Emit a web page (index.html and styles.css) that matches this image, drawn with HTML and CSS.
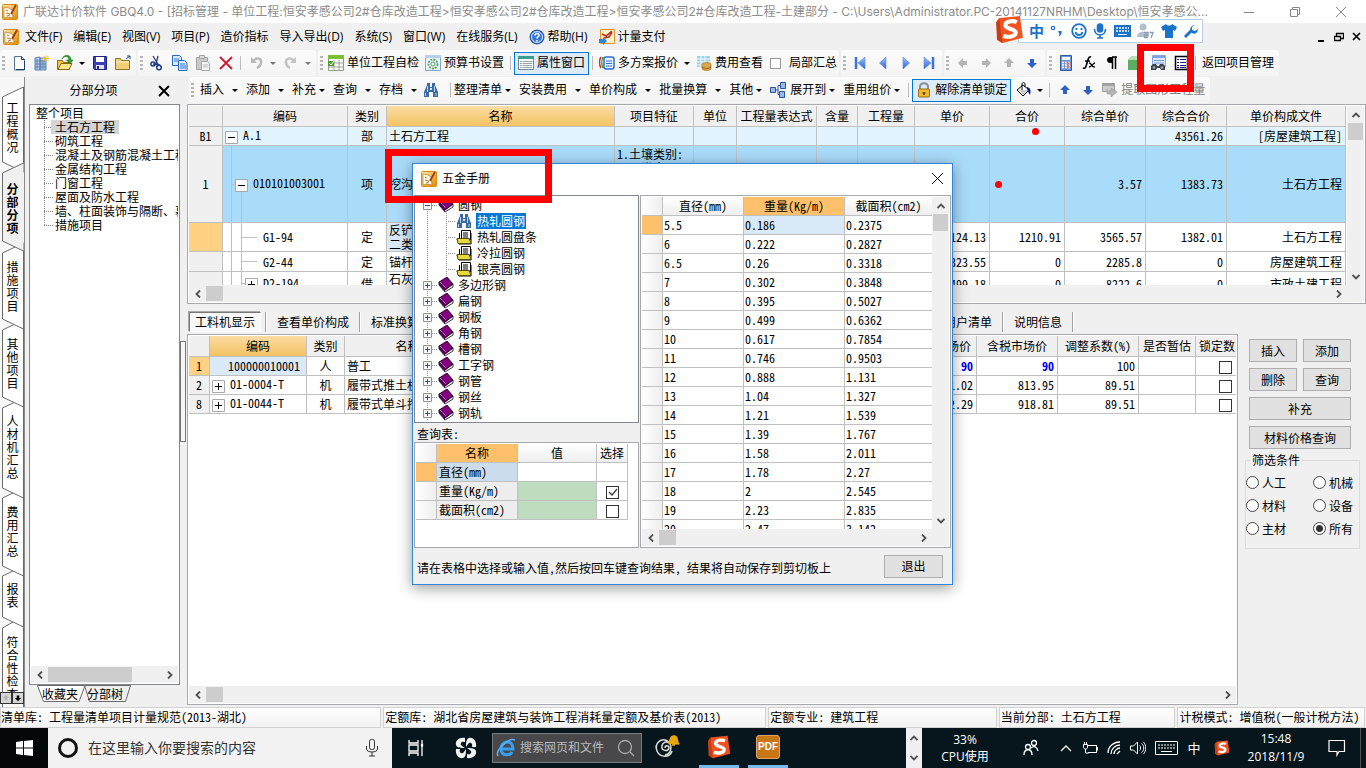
FILE: index.html
```html
<!DOCTYPE html>
<html lang="zh-CN">
<head>
<meta charset="utf-8">
<title>广联达计价软件 GBQ4.0</title>
<link rel="stylesheet" href="styles.css">
</head>
<body>
<svg class="defs" aria-hidden="true">
  <defs>
    <linearGradient id="gold" x1="0" y1="0" x2="1" y2="1"><stop offset="0" stop-color="#fce9a8"/><stop offset="1" stop-color="#e08a00"/></linearGradient>
    <linearGradient id="blue" x1="0" y1="0" x2="0" y2="1"><stop offset="0" stop-color="#9cc0ff"/><stop offset="1" stop-color="#2f62d8"/></linearGradient>
  </defs>
  <symbol id="app" viewBox="0 0 16 16"><rect x=".5" y=".5" width="15" height="15" rx="1" fill="url(#gold)" stroke="#d98a10"/><path d="M2 3l5 1 3 2 1 8-5-1-4 1z" fill="#fffaf0" stroke="#b06a10" stroke-width=".6"/><path d="M4 6l2 1M4 9l4 1M5 12l3-1" stroke="#9b5a10" stroke-width=".8"/><path d="M14 1L9 10" stroke="#a33a10" stroke-width="1.800"/></symbol>
  <symbol id="new" viewBox="0 0 16 16"><path d="M3.500 1.500h7l3 3v10.500h-10z" fill="#fff" stroke="#56749c"/><path d="M10.500 1.500v3h3M5 14.500h8.500V6" fill="none" stroke="#1f3d66"/></symbol>
  <symbol id="building" viewBox="0 0 16 16"><path d="M1 3l5-1v13H1zM6 3h6v12H6z" fill="#b9d0ee" stroke="#5c7fae"/><path d="M3 4v10M8 5v9M10 5v9M1 6h11M1 9h11M1 12h11" stroke="#4e75aa" stroke-width=".8"/><path d="M12 0v7M8.500 3.500h7M9.500 1l5 5M14.500 1l-5 5" stroke="#f3c52c"/></symbol>
  <symbol id="open" viewBox="0 0 16 16"><path d="M.5 14.500v-9h5l1 2h6v7z" fill="#f3c846" stroke="#8f6708"/><path d="M1 14.500l3-6h11l-3 6z" fill="#ffe58c" stroke="#8f6708"/><path d="M5 4c2-4 7-3 7 1h-2.500l3.500 4 3-4h-2C14-1 7-1 5 4z" fill="#2ea52e" stroke="#14701a" stroke-width=".6"/></symbol>
  <symbol id="save" viewBox="0 0 16 16"><path d="M1.500 1.500h13v13h-12l-1-1z" fill="#3b3fb5" stroke="#20247a"/><path d="M4 2h8v5H4z" fill="#fff"/><path d="M4 10h8v4H4z" fill="#dfe3f5"/><path d="M5 11h2v3H5z" fill="#20247a"/></symbol>
  <symbol id="folder" viewBox="0 0 16 16"><path d="M.5 14.500v-11h5l1 2h8v9z" fill="#f0cf78" stroke="#8f7430"/><path d="M1 7h13" stroke="#fff3c4"/><path d="M11 4l4-3M12 1h3v3" stroke="#234a86" fill="none"/></symbol>
  <symbol id="cut" viewBox="0 0 16 16"><path d="M4 1l6 10M9 1L7 9M4 9l7 1" stroke="#27407a" stroke-width="1.300" fill="none"/><circle cx="4" cy="9" r="2" fill="none" stroke="#1c3a86" stroke-width="1.500"/><circle cx="10" cy="12.500" r="2.300" fill="none" stroke="#1c3a86" stroke-width="1.500"/></symbol>
  <symbol id="copy" viewBox="0 0 16 16"><path d="M.5.5h7l2 2v8h-9z" fill="#dce9fb" stroke="#2467b8"/><path d="M6.500 5.500h6l2.500 2.500v7.500H6.500z" fill="#dce9fb" stroke="#2467b8"/><path d="M2 4h5M2 6h4M8 9h5M8 11h6M8 13h6" stroke="#2f7ad2"/></symbol>
  <symbol id="paste" viewBox="0 0 16 16"><path d="M1.500 2.500h11v12h-11z" fill="#c9c9c9" stroke="#a4a4a4"/><path d="M4.500.5h5v3h-5z" fill="#ddd" stroke="#a4a4a4"/><path d="M6.500 6.500h6l2 2v7h-8z" fill="#f4f4f4" stroke="#a9a9a9"/><path d="M8 10h5M8 12h5" stroke="#bbb"/></symbol>
  <symbol id="del" viewBox="0 0 16 16"><path d="M2 2l12 12M14 2L2 14" stroke="#d2172f" stroke-width="1.800"/></symbol>
  <symbol id="undo" viewBox="0 0 16 16"><path d="M3 2v6h6z" fill="#b9b9b9"/><path d="M5 6c3-4 9-3 8 2-.4 2.500-2 4-4 5" fill="none" stroke="#b9b9b9" stroke-width="2.500"/></symbol>
  <symbol id="redo" viewBox="0 0 16 16"><path d="M13 2v6H7z" fill="#c4c4c4"/><path d="M11 6C8 2 2 3 3 8c.4 2.500 2 4 4 5" fill="none" stroke="#c4c4c4" stroke-width="2.500"/></symbol>
  <symbol id="check" viewBox="0 0 16 16"><path d="M.5.5h15v15H.5z" fill="#fff" stroke="#8d9c8d"/><path d="M0 0h16v4H0z" fill="#7cbf31"/><path d="M1 8h14M1 12h14M6 5v10M11 5v10" stroke="#9aa39a"/><path d="M0 6h6v5H0z" fill="#4d9e25"/><path d="M1 8l2 2 3-4" stroke="#fff" fill="none"/></symbol>
  <symbol id="gear" viewBox="0 0 16 16"><path d="M.5.5h15v15H.5z" fill="#eef5fb" stroke="#7fa6cc"/><path d="M0 0h16v3H0z" fill="#b5d0ea"/><circle cx="8" cy="9" r="4.500" fill="none" stroke="#58a268" stroke-width="1.800" stroke-dasharray="2 1"/><circle cx="8" cy="9" r="2" fill="none" stroke="#58a268"/></symbol>
  <symbol id="props" viewBox="0 0 16 16"><path d="M.5 1.500h15v13H.5z" fill="#fff" stroke="#6d8aa5"/><path d="M0 1h16v3H0z" fill="#3c9a94"/><path d="M2 6.500h2M5 6.500h9M2 8.500h2M5 8.500h9M2 10.500h2M5 10.500h9M2 12.500h2M5 12.500h9" stroke="#93a3b0"/></symbol>
  <symbol id="quote" viewBox="0 0 16 16"><path d="M2 2C0 5 0 10 2 13" stroke="#e02d2d" fill="none" stroke-width="1.500"/><path d="M4 2C2.500 5 2.500 10 4 13" stroke="#38a038" fill="none" stroke-width="1.500"/><rect x="5" y="2" width="10" height="12" rx="2" fill="#e9f2ff" stroke="#2c6dd0" stroke-width="1.500"/><path d="M7 6h6M7 8.500h6M7 11h6" stroke="#2c6dd0"/></symbol>
  <symbol id="cost" viewBox="0 0 16 16"><path d="M1 1h13v11H1z" fill="#9fd2e8"/><path d="M1 4h13M1 7h13M1 10h13M5 1v11M9 1v11" stroke="#eefaff"/><path d="M6 9c2-2 8-2 9 0v5c-2 2-7 2-9 0z" fill="#d8a94c" stroke="#a97a22" stroke-width=".7"/><path d="M6 12c3 2 6 2 9 0" stroke="#8d6113" fill="none"/></symbol>
  <symbol id="first" viewBox="0 0 16 16"><path d="M4 2v12" stroke="#3f73dc" stroke-width="2.500"/><path d="M13 2L6 8l7 6z" fill="url(#blue)" stroke="#5c86de" stroke-width=".6"/></symbol>
  <symbol id="prev" viewBox="0 0 16 16"><path d="M11 2L4.500 8 11 14z" fill="url(#blue)" stroke="#5c86de" stroke-width=".6"/></symbol>
  <symbol id="arrow" viewBox="0 0 16 16"><path d="M8 3l5 5h-3v4H6V8H3z" fill="currentColor"/></symbol>
  <symbol id="calc" viewBox="0 0 16 16"><path d="M2.500.5h11v15h-11z" fill="#6f97d8" stroke="#355a9c"/><path d="M4 2h8v3H4z" fill="#fff"/><path d="M4 7.500h8M4 10h8M4 12.500h8" stroke="#fff" stroke-width="1.500" stroke-dasharray="2 1"/><path d="M10.500 7v6" stroke="#ee7a6b"/></symbol>
  <symbol id="fx" viewBox="0 0 16 16"><path d="M10 2C8 1 7 4 6 8s-1.500 6-4 5M4 6h5" fill="none" stroke="#000" stroke-width="1.600"/><path d="M8 8c3 0 2 4 6 4M14 8c-2 0-3 4-6 4" fill="none" stroke="#000" stroke-width="1.300"/></symbol>
  <symbol id="para" viewBox="0 0 16 16"><path d="M8 2H6C2 2 2 8 6 8h2z"/><path d="M8 2h5M8.500 2v12M11.500 2v12" stroke="#000" stroke-width="1.500"/></symbol>
  <symbol id="cube" viewBox="0 0 16 16"><path d="M1 5l4-4h10v10l-4 4H1z" fill="#5cae65"/><path d="M1 5l4-4h10l-4 4z" fill="#b5e0b5"/><path d="M11 5l4-4v10l-4 4z" fill="#2a7a37"/></symbol>
  <symbol id="manual" viewBox="0 0 16 16"><path d="M2.500.5h13v11h-13z" fill="#dbe7fb" stroke="#8ba5d8"/><path d="M3 1h12v2H3z" fill="#7fa2e2"/><path d="M4 5.500h10M4 8h10" stroke="#7b9bd4"/><path d="M1 11l2-2h3l1 2h2l1-2h3l2 2v4h-4l-1-2H7l-1 2H1z" fill="#3c4149"/><circle cx="4" cy="12.500" r="1.300" fill="#aab"/><circle cx="12" cy="12.500" r="1.300" fill="#aab"/></symbol>
  <symbol id="list" viewBox="0 0 16 16"><path d="M2.500 1.500h12v13h-12z" fill="#fff" stroke="#000" stroke-width="1.500"/><path d="M4 4.500h2M7 4.500h6M4 7.500h2M7 7.500h6M4 10.500h2M7 10.500h6M4 12.500h2M7 12.500h6" stroke="#1a1a90"/></symbol>
  <symbol id="bino" viewBox="0 0 16 16"><path d="M4 1h3v4h2V1h3v2l3 7v5h-5v-5H6v5H1v-5l3-7z" fill="#3a69a8"/><path d="M4.500 4v6M11.500 4v6M2.500 11v3M13 11v3" stroke="#b8d5f2"/><path d="M7 6h2v2H7z" fill="#dceafa"/></symbol>
  <symbol id="expand" viewBox="0 0 16 16"><path d="M.5 5.500h5v5h-5zM10.500.5h5v6h-5zM9.500 9.500h5v6h-5z" fill="#9ab8e8" stroke="#2b52a0"/><path d="M5 8h3M8 3.500v9M8 3.500h2M8 12.500h2" stroke="#2b52a0" fill="none"/></symbol>
  <symbol id="lock" viewBox="0 0 16 16"><path d="M4 7V5c0-5 8-5 8 0v2" fill="none" stroke="#8b8f96" stroke-width="2"/><rect x="2.500" y="7" width="11" height="8" rx="1" fill="#f1b932" stroke="#9a6b08"/><path d="M8 10v3M6.500 11h3" stroke="#5e4106" stroke-width="1.500"/></symbol>
  <symbol id="bucket" viewBox="0 0 16 16"><path d="M2 8l6-5 6 5-6 6z" fill="#fff" stroke="#000"/><path d="M4 8h9l-5 5z" fill="#c9c9c9"/><path d="M7 8V2c0-2 3-2 3 0v3" fill="none" stroke="#000"/><path d="M12 5c4 1 4 4 3 8-2-2-2-5-3-6z" fill="#0c1c86"/></symbol>
  <symbol id="extract" viewBox="0 0 16 16"><path d="M.5 1.500h12v8H.5z" fill="#ccc" stroke="#9d9d9d"/><path d="M1 2h11v2H1z" fill="#a4a4a4"/><path d="M5 7v5h4v3l6-5-6-4v3H7" fill="#b4b4b4" stroke="#989898" stroke-width=".6"/></symbol>
  <symbol id="help" viewBox="0 0 16 16"><circle cx="8" cy="8" r="7" fill="#3a78d8" stroke="#1c4a9c"/><circle cx="8" cy="8" r="5.500" fill="none" stroke="#d9e7fb"/><path d="M6 6.500c0-3 4.500-2.500 4 0-.3 1.200-2 1.300-2 3M8 11v1.500" fill="none" stroke="#fff" stroke-width="1.500"/></symbol>
  <symbol id="pay" viewBox="0 0 16 16"><path d="M1.500.5h14v14h-14z" fill="#fff0cc" stroke="#e3952b"/><path d="M3 5l4 2 6-5M5 9l5-1 3-5" stroke="#b5321e" stroke-width="1.600" fill="none"/><path d="M0 10h4V8l4 4-4 4v-2H0z" fill="#2f86d6"/></symbol>
  <symbol id="book" viewBox="0 0 16 16"><path d="M1 5v3l6 7 8-5V7l-8 6z" fill="#fff" stroke="#000" stroke-width=".8"/><path d="M1 5l8-5 6 7-8 6z" fill="#800080" stroke="#000" stroke-width=".8"/><path d="M2 5l6 6" stroke="#fff" stroke-width=".8" stroke-dasharray="1 1"/><path d="M1 5v3l6 7v-2z" fill="#55005a"/></symbol>
  <symbol id="pages" viewBox="0 0 16 16"><path d="M5.500 1.500h9v9h-9z" fill="#fff" stroke="#000"/><path d="M7 4h5M7 6h5M7 8h5" stroke="#000"/><path d="M3.500 4v6H1l2 5h12V4M1 10h14" fill="none" stroke="#000"/><path d="M1 9.500h12l2 5H2z" fill="#e6da3c" stroke="#3c3800" stroke-width=".8"/></symbol>
  <symbol id="sogou" viewBox="0 0 28 28"><path d="M4 3l20-2 3 21-20 5-5-3z" fill="#f4511e"/><path d="M2 24L1 7l3-4 3 24z" fill="#c63d12"/><path d="M21 7c-4-2-11-1-11 3s10 3 10 7-7 5-12 3" fill="none" stroke="#fff" stroke-width="4"/></symbol>
  <symbol id="left" viewBox="0 0 8 8"><path d="M6 .5L2.500 4 6 7.500" fill="none" stroke="#505050" stroke-width="1.800"/></symbol>
  <symbol id="plus" viewBox="0 0 13 13"><path d="M.5.5h12v12H.5z" fill="#fff" stroke="#a8a8a8"/><path d="M3 6.500h7M6.500 3v7" stroke="#000"/></symbol>
  <symbol id="minus" viewBox="0 0 13 13"><path d="M.5.5h12v12H.5z" fill="#fff" stroke="#a8a8a8"/><path d="M3 6.500h7" stroke="#000"/></symbol>
  <symbol id="tplus" viewBox="0 0 9 9"><path d="M.5.5h8v8h-8z" fill="#f6f6f6" stroke="#919191"/><path d="M2 4.500h5M4.500 2v5" stroke="#3050a0"/></symbol>
  <symbol id="tminus" viewBox="0 0 9 9"><path d="M.5.5h8v8h-8z" fill="#f6f6f6" stroke="#919191"/><path d="M2 4.500h5" stroke="#3050a0"/></symbol>
</svg>

<header class="titlebar">
  <svg class="ic"><use href="#app"/></svg>
  <h1 class="title">广联达计价软件 GBQ4.0 - [招标管理 - 单位工程:恒安孝感公司2#仓库改造工程&gt;恒安孝感公司2#仓库改造工程&gt;恒安孝感公司2#仓库改造工程-土建部分 - C:\Users\Administrator.PC-20141127NRHM\Desktop\恒安孝感公...</h1>
  <div class="winbtns">
    <button aria-label="最小化"><svg class="ic10" viewBox="0 0 10 10"><path d="M0 5.500h10" stroke="#888"/></svg></button>
    <button aria-label="还原"><svg class="ic10" viewBox="0 0 10 10"><path d="M.5 2.500h7v7h-7zM2.500 2V.5h7v7H8" fill="none" stroke="#888"/></svg></button>
    <button aria-label="关闭"><svg class="ic10" viewBox="0 0 10 10"><path d="M0 0l10 10M10 0L0 10" stroke="#888"/></svg></button>
  </div>
</header>

<nav class="menubar">
  <svg class="ic"><use href="#app"/></svg>
  <button>文件(F)</button><button>编辑(E)</button><button>视图(V)</button><button>项目(P)</button><button>造价指标</button><button>导入导出(D)</button><button>系统(S)</button><button>窗口(W)</button><button>在线服务(L)</button>
  <button class="withicon"><svg class="ic"><use href="#help"/></svg>帮助(H)</button>
  <button class="withicon"><svg class="ic"><use href="#pay"/></svg>计量支付</button>
  <div class="mdibtns">
    <button aria-label="最小化子窗口"><svg class="ic10" viewBox="0 0 10 10"><path d="M2 9h6" stroke="#000" stroke-width="2"/></svg></button>
    <button aria-label="还原子窗口"><svg class="ic10" viewBox="0 0 10 10"><path d="M.5 4.500h6v4h-6zM2.500 4V1.500h7v5H7M0 4.500h7M2 1.500h8" fill="none" stroke="#000" stroke-width="1.300"/></svg></button>
    <button aria-label="关闭子窗口"><svg class="ic10" viewBox="0 0 10 10"><path d="M1 1l7 7M8 1L1 8" stroke="#000" stroke-width="1.600"/></svg></button>
  </div>
</nav>

<div class="toolbar">
  <div class="group"><i class="grip"></i>
    <button class="slot" aria-label="新建"><svg class="ic"><use href="#new"/></svg></button><button class="slot" aria-label="新建工程"><svg class="ic"><use href="#building"/></svg></button><button class="slot" aria-label="打开"><svg class="ic"><use href="#open"/></svg></button><button class="drop" aria-label="打开选项"></button><button class="slot" aria-label="保存"><svg class="ic"><use href="#save"/></svg></button><button class="slot" aria-label="目录"><svg class="ic"><use href="#folder"/></svg></button></div>
  <div class="group"><i class="grip"></i>
    <button class="slot" aria-label="剪切"><svg class="ic"><use href="#cut"/></svg></button><button class="slot" aria-label="复制"><svg class="ic"><use href="#copy"/></svg></button><button class="slot" aria-label="粘贴"><svg class="ic"><use href="#paste"/></svg></button><button class="slot" aria-label="删除"><svg class="ic"><use href="#del"/></svg></button><i class="sep"></i><button class="slot" aria-label="撤销"><svg class="ic"><use href="#undo"/></svg></button><button class="drop dim" aria-label="撤销选项"></button><button class="slot" aria-label="重做"><svg class="ic"><use href="#redo"/></svg></button><button class="drop dim" aria-label="重做选项"></button></div>
  <div class="group"><i class="grip"></i>
    <button class="tool"><svg class="ic"><use href="#check"/></svg>单位工程自检</button><button class="tool"><svg class="ic"><use href="#gear"/></svg>预算书设置</button><i class="sep"></i><button class="tool on"><svg class="ic"><use href="#props"/></svg>属性窗口</button><i class="sep"></i><button class="tool"><svg class="ic"><use href="#quote"/></svg>多方案报价</button><button class="drop" aria-label="报价选项"></button><button class="tool"><svg class="ic"><use href="#cost"/></svg>费用查看</button><label class="opt"><input type="checkbox" class="box small">局部汇总</label></div>
  <div class="group"><i class="grip"></i>
    <button class="slot" aria-label="首条"><svg class="ic"><use href="#first"/></svg></button><button class="slot" aria-label="上一条"><svg class="ic"><use href="#prev"/></svg></button><button class="slot" aria-label="下一条"><svg class="ic flip"><use href="#prev"/></svg></button><button class="slot" aria-label="末条"><svg class="ic flip"><use href="#first"/></svg></button></div>
  <div class="group"><i class="grip"></i>
    <button class="slot dimarrow" aria-label="左移"><svg class="ic r270"><use href="#arrow"/></svg></button><button class="slot dimarrow" aria-label="右移"><svg class="ic r90"><use href="#arrow"/></svg></button><button class="slot dimarrow" aria-label="上移"><svg class="ic"><use href="#arrow"/></svg></button><button class="slot bluearrow" aria-label="下移"><svg class="ic r180"><use href="#arrow"/></svg></button></div>
  <div class="group"><i class="grip"></i>
    <button class="slot" aria-label="计算器"><svg class="ic"><use href="#calc"/></svg></button><button class="slot" aria-label="函数"><svg class="ic"><use href="#fx"/></svg></button><button class="slot" aria-label="符号"><svg class="ic"><use href="#para"/></svg></button><button class="slot" aria-label="图元"><svg class="ic"><use href="#cube"/></svg></button><button class="slot" aria-label="五金手册"><svg class="ic"><use href="#manual"/></svg></button><button class="slot" aria-label="清单"><svg class="ic"><use href="#list"/></svg></button><i class="sep"></i><button class="tool">返回项目管理</button></div>
</div>

<div class="work">
  <nav class="rail">
    <svg class="railart" width="25" height="640" aria-hidden="true">
      <g fill="#fff" stroke="#6a6a6a">
        <path d="M2.500 640V551l21-12v101z"/><path d="M2.500 499v41l21 10V489z"/><path d="M2.500 421v68l21 10V411z"/><path d="M2.500 331v80l21 10V321z"/><path d="M2.500 253v67l21 10V243z"/><path d="M2.500 176v66l21 10V166z"/>
        <path d="M2.500 20v65l21 10V10z"/>
      </g>
      <path d="M2.500 96v68l21 10V86z" fill="#f0f0f0"/><path d="M23.500 86l-21 10v68l21 10" fill="none" stroke="#6a6a6a"/>
    </svg>
    <button class="t1">工程概况</button><button class="t2 cur">分部分项</button><button class="t3">措施项目</button><button class="t3">其他项目</button><button class="t5">人材机汇总</button><button class="t3">费用汇总</button><button class="t7">报表</button><button class="t8">符合性检查</button>
    <div class="railscroll"><button aria-label="向上"><svg class="ic10 dimarrow"><use href="#arrow"/></svg></button><button aria-label="向下"><svg class="ic10 r180"><use href="#arrow"/></svg></button></div>
  </nav>

  <aside class="side">
    <div class="sidehead"><h2>分部分项</h2><button aria-label="关闭面板"><svg width="12" height="12" viewBox="0 0 12 12"><path d="M1 1l10 10M11 1L1 11" stroke="#000" stroke-width="2"/></svg></button></div>
    <div class="sidebox">
      <ul class="tree">
        <li class="root">整个项目</li>
        <li><span class="sel">土石方工程</span></li><li><span>砌筑工程</span></li><li><span>混凝土及钢筋混凝土工程</span></li><li><span>金属结构工程</span></li><li><span>门窗工程</span></li><li><span>屋面及防水工程</span></li><li><span>墙、柱面装饰与隔断、幕墙</span></li><li><span>措施项目</span></li>
      </ul>
      <div class="hscroll"><button aria-label="左滚"><svg class="ic8"><use href="#left"/></svg></button><i class="thumb wide"></i><button class="end" aria-label="右滚"><svg class="ic8 flip"><use href="#left"/></svg></button></div>
    </div>
    <div class="sidetabs">
      <svg width="100" height="19" aria-hidden="true"><path d="M55.500.5h46l-5 16H60.500z" fill="#f0f0f0" stroke="#6a6a6a"/><path d="M8.500.5l6 16H50l6-16z" fill="#fff" stroke="#6a6a6a"/></svg>
      <button>收藏夹</button><button>分部树</button>
    </div>
  </aside>

  <div class="splitter"><i></i></div>

  <main class="content">
    <div class="toolbar second">
      <div class="group"><i class="grip"></i>
        <button class="menu">插入</button><button class="menu">添加</button><button class="menu tight">补充</button><button class="menu">查询</button><button class="menu">存档</button><button class="slot find" aria-label="查找"><svg class="ic"><use href="#bino"/></svg></button><i class="sep"></i><button class="menu tight">整理清单</button><button class="menu">安装费用</button><button class="menu">单价构成</button><button class="menu">批量换算</button><button class="menu tight">其他</button><button class="menu tight"><svg class="ic"><use href="#expand"/></svg>展开到</button><button class="menu tight">重用组价</button><i class="sep"></i><button class="tool on"><svg class="ic"><use href="#lock"/></svg>解除清单锁定</button><button class="slot" aria-label="填充色"><svg class="ic"><use href="#bucket"/></svg></button><button class="drop" aria-label="颜色选项"></button><i class="sep"></i><button class="slot bluearrow" aria-label="上移行"><svg class="ic"><use href="#arrow"/></svg></button><button class="slot bluearrow" aria-label="下移行"><svg class="ic r180"><use href="#arrow"/></svg></button><button class="tool off"><svg class="ic"><use href="#extract"/></svg>提取图形工程量</button></div>
    </div>

    <section class="panel upper">
      <div class="viewport">
        <table class="grid bill">
          <colgroup><col class="c34"><col class="c125"><col class="c39"><col><col class="c79"><col class="c43"><col class="c80"><col class="c41"><col class="c57"><col class="c75"><col class="c75"><col class="c81"><col class="c81"><col class="c119"></colgroup>
          <thead><tr><th></th><th>编码</th><th>类别</th><th class="hot">名称</th><th>项目特征</th><th>单位</th><th>工程量表达式</th><th>含量</th><th>工程量</th><th>单价</th><th>合价</th><th>综合单价</th><th>综合合价</th><th>单价构成文件</th></tr></thead>
          <tbody>
            <tr class="r1"><th>B1</th><td class="lv0"><svg class="ic13"><use href="#minus"/></svg>A.1</td><td class="mid">部</td><td>土石方工程</td><td></td><td></td><td></td><td></td><td></td><td></td><td></td><td></td><td class="num">43561.26</td><td class="num">[房屋建筑工程]</td></tr>
            <tr class="r2"><th>1</th><td class="lv1"><svg class="ic13"><use href="#minus"/></svg>010101003001</td><td class="mid">项</td><td>挖沟</td><td class="feat">1.土壤类别:<br>&#12288;三类土</td><td></td><td></td><td></td><td></td><td></td><td></td><td class="num">3.57</td><td class="num">1383.73</td><td class="num">土石方工程</td></tr>
            <tr class="r3"><th class="hotrow"></th><td class="lv2">G1-94</td><td class="mid">定</td><td class="curcell">反铲<br>二类</td><td></td><td></td><td></td><td></td><td></td><td class="num">124.13</td><td class="num">1210.91</td><td class="num">3565.57</td><td class="num">1382.01</td><td class="num">土石方工程</td></tr>
            <tr class="r4"><th></th><td class="lv2">G2-44</td><td class="mid">定</td><td>锚杆</td><td></td><td></td><td></td><td></td><td></td><td class="num">323.55</td><td class="num">0</td><td class="num">2285.8</td><td class="num">0</td><td class="num">房屋建筑工程</td></tr>
            <tr class="r5"><th></th><td class="lv3"><svg class="ic13"><use href="#plus"/></svg>D2-194</td><td class="mid">借</td><td class="top">石灰</td><td></td><td></td><td></td><td></td><td></td><td class="num">499.18</td><td class="num">0</td><td class="num">8222.6</td><td class="num">0</td><td class="num">市政土建工程</td></tr>
          </tbody>
        </table>
        <div class="vscroll"><button aria-label="上滚"><svg class="ic8 r90"><use href="#left"/></svg></button><i class="vthumb"></i><button class="end" aria-label="下滚"><svg class="ic8 r270"><use href="#left"/></svg></button></div>
      </div>
      <div class="hscroll inset"><button aria-label="左滚"><svg class="ic8"><use href="#left"/></svg></button><i class="thumb"></i><button class="end" aria-label="右滚"><svg class="ic8 flip"><use href="#left"/></svg></button></div>
    </section>

    <div class="tabs">
      <button class="cur">工料机显示</button><i></i><button>查看单价构成</button><i></i><button>标准换算</button><span class="grow"></span><button>用户清单</button><i></i><button>说明信息</button><i></i>
    </div>

    <div class="lower">
      <section class="panel detail">
        <div class="viewport">
          <table class="grid res">
            <colgroup><col class="c21"><col class="c97"><col class="c38"><col class="c126"><col><col class="c81"><col class="c81"><col class="c81"><col class="c57"><col class="c40"></colgroup>
            <thead><tr><th></th><th class="hot">编码</th><th>类别</th><th>名称</th><th></th><th class="rt">不含税市场价</th><th>含税市场价</th><th>调整系数(%)</th><th>是否暂估</th><th class="cut">锁定数</th></tr></thead>
            <tbody>
              <tr><th class="hotrow">1</th><td class="curcell num code">100000010001</td><td class="mid">人</td><td>普工</td><td></td><td class="num strong">90</td><td class="num strong">90</td><td class="num">100</td><td></td><td class="ck"><input type="checkbox" class="box" aria-label="锁定第1行"></td></tr>
              <tr><th>2</th><td class="lvp"><svg class="ic13"><use href="#plus"/></svg>01-0004-T</td><td class="mid">机</td><td>履带式推土机</td><td></td><td class="num">801.02</td><td class="num">813.95</td><td class="num">89.51</td><td></td><td class="ck"><input type="checkbox" class="box" aria-label="锁定第2行"></td></tr>
              <tr><th>8</th><td class="lvp"><svg class="ic13"><use href="#plus"/></svg>01-0044-T</td><td class="mid">机</td><td>履带式单斗挖掘机</td><td></td><td class="num">902.29</td><td class="num">918.81</td><td class="num">89.51</td><td></td><td class="ck"><input type="checkbox" class="box" aria-label="锁定第8行"></td></tr>
            </tbody>
          </table>
        </div>
        <div class="hscroll"><button aria-label="左滚"><svg class="ic8"><use href="#left"/></svg></button><i class="thumb"></i><button class="end" aria-label="右滚"><svg class="ic8 flip"><use href="#left"/></svg></button></div>
      </section>
      <aside class="actions">
        <div class="btns"><button>插入</button><button>添加</button><button>删除</button><button>查询</button><button class="full">补充</button><button class="full">材料价格查询</button></div>
        <fieldset>
          <legend>筛选条件</legend>
          <label><input type="radio" name="f">人工</label><label><input type="radio" name="f">机械</label><label><input type="radio" name="f">材料</label><label><input type="radio" name="f">设备</label><label><input type="radio" name="f">主材</label><label><input type="radio" name="f" checked>所有</label>
        </fieldset>
      </aside>
    </div>
  </main>
</div>

<footer class="status"><span>清单库: 工程量清单项目计量规范(2013-湖北)</span><span>定额库: 湖北省房屋建筑与装饰工程消耗量定额及基价表(2013)</span><span>定额专业: 建筑工程</span><span>当前分部: 土石方工程</span><span>计税模式: 增值税(一般计税方法)</span></footer>

<div class="taskbar">
  <button class="start" aria-label="开始"><svg width="17" height="16" viewBox="0 0 17 16"><path d="M0 2l7-1v6.500H0zM8 1l9-1v7.500H8zM0 8.500h7V15l-7-1zM8 8.500h9V16l-9-1z" fill="#fff"/></svg></button>
  <div class="cortana"><svg width="22" height="22" viewBox="0 0 22 22"><circle cx="11" cy="11" r="8.500" fill="none" stroke="#111" stroke-width="3"/></svg><input type="text" placeholder="在这里输入你要搜索的内容" aria-label="搜索"><svg width="12" height="18" viewBox="0 0 12 18"><rect x="3.500" y=".5" width="5" height="10" rx="2" fill="none" stroke="#333"/><path d="M.5 7v3c0 4 11 4 11 0V7M6 13v4M3 17h6" fill="none" stroke="#333"/></svg></div>
  <button class="app" aria-label="任务视图"><svg width="18" height="18" viewBox="0 0 18 18" fill="none" stroke="#fff" stroke-width="1.300"><path d="M2 1v3h9V1M2 6h9v6H2zM2 17v-3h9v3M15 1v3M15 7v10"/><path d="M14.500 5h1v2h-1z" fill="#fff"/></svg></button>
  <button class="app" aria-label="浏览器"><svg width="22" height="22" viewBox="0 0 22 22" fill="#f2f2f2"><path d="M10 1C4 0 0 4 1 8c1 3 5 3 9 3-3-2-5-3-4-5s3-1 4-1z"/><path d="M21 10c1-6-3-10-7-9-3 1-3 5-3 9 2-3 3-5 5-4s1 3 1 4z"/><path d="M12 21c6 1 10-3 9-7-1-3-5-3-9-3 3 2 5 3 4 5s-3 1-4 1z"/><path d="M1 12c-1 6 3 10 7 9 3-1 3-5 3-9-2 3-3 5-5 4s-1-3-1-4z"/></svg></button>
  <div class="iebox"><svg width="20" height="20" viewBox="0 0 20 20"><path d="M4 11h13c0-11-13-8-12 1 1 6 9 6 11 2" fill="none" stroke="#39a0f0" stroke-width="3"/><path d="M2 18C-1 13 12-1 19 2" fill="none" stroke="#54b4fa" stroke-width="1.500"/></svg><input type="text" placeholder="搜索网页和文件" aria-label="搜索网页和文件"><svg width="18" height="18" viewBox="0 0 18 18" fill="none" stroke="#aaa" stroke-width="1.300"><circle cx="8" cy="8" r="6.500"/><path d="M13 13l4 4"/></svg></div>
  <button class="app" aria-label="加速球"><svg width="28" height="28" viewBox="0 0 28 28" fill="none" stroke="#ddd" stroke-width="1.500"><path d="M19 14c0-7-8-8-9-2-1 5 6 6 7 2 0-3-4-3-4 0M17 8C9 2 2 10 5 17c3 7 13 7 15 0M13 21c5-1 6-4 6-8"/><path d="M16 9c3-1 1-7 6-7s2 6 5 8zM20 11h3" fill="#e8a70c" stroke="#e8a70c"/></svg></button>
  <button class="app run" aria-label="搜狗"><svg width="24" height="24"><use href="#sogou"/></svg></button>
  <button class="app run" aria-label="PDF"><span class="pdf">PDF</span></button>
  <div class="tray">
    <div class="spin"><button aria-label="上"><svg class="ic8 r90"><use href="#left"/></svg></button><button aria-label="下"><svg class="ic8 r270"><use href="#left"/></svg></button></div>
    <p class="cpu">33%<br>CPU使用</p>
    <button class="w46" aria-label="人脉"><svg width="16" height="18" viewBox="0 0 16 18" fill="none" stroke="#fff" stroke-width="1.300"><circle cx="5" cy="8" r="2.500"/><circle cx="11" cy="4" r="2.500"/><path d="M1 16c0-7 8-7 8 0M8 9c3-3 6-1 7 3"/></svg></button>
    <button aria-label="隐藏的图标"><svg width="12" height="7" viewBox="0 0 12 7"><path d="M1 6l5-5 5 5" fill="none" stroke="#fff" stroke-width="1.300"/></svg></button>
    <button aria-label="电源"><svg width="16" height="14" viewBox="0 0 16 14" fill="none" stroke="#fff"><path d="M5 4.500h9.500v7H6M14.500 6.500h1v3M1.500 3.500h4v3c0 2-4 2-4 0zM2.500 1v2M4.500 1v2M3.500 8v4h3"/></svg></button>
    <button aria-label="网络"><svg width="14" height="14" viewBox="0 0 14 14" fill="none" stroke="#fff" stroke-width="1.300"><path d="M1 12C1 6 6 1 13 1M4 13c0-5 4-9 9-9M7 13c0-3 3-6 6-6M10 13l3-3"/></svg></button>
    <button aria-label="音量"><svg width="16" height="14" viewBox="0 0 16 14" fill="none" stroke="#fff"><path d="M.5 5v4h3l4 4V1l-4 4zM9.500 4.500c1.500 1 1.500 4 0 5M11.500 2.500c3 2 3 7 0 9M13.500 1c3 3 3 9 0 12"/></svg></button>
    <button class="w32" aria-label="键盘"><svg width="23" height="14" viewBox="0 0 23 14" fill="none" stroke="#fff"><path d="M.5.5h22v13H.5z"/><path d="M3 4h17M3 7h17" stroke-dasharray="2 1"/><path d="M6 10.500h11"/></svg></button>
    <button class="zh">中</button>
    <button class="w32" aria-label="输入法"><svg width="16" height="16"><use href="#sogou"/></svg></button>
    <p class="clock">15:48<br>2018/11/9</p>
    <button class="w46" aria-label="通知"><svg width="18" height="18" viewBox="0 0 18 18"><path d="M1 1.500h15.500v11H11L9 16v-3.500H1z" fill="none" stroke="#fff" stroke-width="1.200"/></svg></button>
    <i class="edge"></i>
  </div>
</div>

<div class="ime">
  <svg class="imelogo"><use href="#sogou"/></svg>
  <b>中</b>
  <svg width="14" height="14" viewBox="0 0 14 14"><circle cx="3" cy="4" r="1.700" fill="none" stroke="#1a73c9" stroke-width="1.200"/><path d="M8 7h3.500c.6 3-1 5-3 5.500l1-2.500z" fill="#1a73c9"/></svg>
  <svg width="16" height="16" viewBox="0 0 16 16" fill="none" stroke="#1a73c9" stroke-width="1.800"><circle cx="8" cy="8" r="6.800"/><path d="M4.500 9c1 4 6 4 7 0M5.500 5v2M10.500 5v2"/></svg>
  <svg width="14" height="16" viewBox="0 0 14 16" fill="none" stroke="#1a73c9" stroke-width="1.600"><rect x="4.500" y="1" width="5" height="8" rx="2.500" fill="#1a73c9"/><path d="M1.500 6c0 8 11 8 11 0M7 12v3M4 15h6"/></svg>
  <svg width="17" height="12" viewBox="0 0 17 12"><path d="M0 0h17v12H0z" fill="#1a73c9"/><path d="M2 3h13M2 6h13" stroke="#fff" stroke-width="1.500" stroke-dasharray="2 1"/><path d="M4 9.500h9" stroke="#fff"/></svg>
  <svg width="17" height="16" viewBox="0 0 17 16" fill="#b3bfcd"><circle cx="6" cy="4" r="3.500"/><path d="M0 14c0-7 12-7 12 0z"/><path d="M7 9.500h4v2.500H7.500v2.500H11M12.500 9.500H16l-2 5.500" fill="none" stroke="#8c9bb0" stroke-width="1.300"/></svg>
  <svg width="16" height="14" viewBox="0 0 16 14"><path d="M5 0c1 2 5 2 6 0l5 3-2 4-2-1v8H4V6L2 7 0 3z" fill="#1a73c9"/></svg>
  <svg width="15" height="15" viewBox="0 0 15 15"><path d="M2 13l7-7" stroke="#1a73c9" stroke-width="3"/><path d="M12 1L9 3v3l3 1 3-2c0 5-5 6-7 3s0-7 4-7z" fill="#1a73c9"/></svg>
</div>

<div class="dialog" role="dialog" aria-labelledby="dlgname">
  <div class="dlghead"><svg class="ic"><use href="#app"/></svg><h2 id="dlgname">五金手册</h2><button aria-label="关闭"><svg width="11" height="11" viewBox="0 0 11 11"><path d="M0 0l11 11M11 0L0 11" stroke="#111"/></svg></button></div>
  <div class="dlgbody">
    <div class="dlgleft">
      <ul class="booktree">
        <li><svg class="ic9"><use href="#tminus"/></svg><svg class="ic"><use href="#book"/></svg><span>圆钢</span></li>
        <li class="leaf"><svg class="ic"><use href="#bino"/></svg><span class="sel">热轧圆钢</span></li>
        <li class="leaf"><svg class="ic"><use href="#pages"/></svg><span>热轧圆盘条</span></li>
        <li class="leaf"><svg class="ic"><use href="#pages"/></svg><span>冷拉圆钢</span></li>
        <li class="leaf"><svg class="ic"><use href="#pages"/></svg><span>银亮圆钢</span></li>
        <li><svg class="ic9"><use href="#tplus"/></svg><svg class="ic"><use href="#book"/></svg><span>多边形钢</span></li>
        <li><svg class="ic9"><use href="#tplus"/></svg><svg class="ic"><use href="#book"/></svg><span>扁钢</span></li>
        <li><svg class="ic9"><use href="#tplus"/></svg><svg class="ic"><use href="#book"/></svg><span>钢板</span></li>
        <li><svg class="ic9"><use href="#tplus"/></svg><svg class="ic"><use href="#book"/></svg><span>角钢</span></li>
        <li><svg class="ic9"><use href="#tplus"/></svg><svg class="ic"><use href="#book"/></svg><span>槽钢</span></li>
        <li><svg class="ic9"><use href="#tplus"/></svg><svg class="ic"><use href="#book"/></svg><span>工字钢</span></li>
        <li><svg class="ic9"><use href="#tplus"/></svg><svg class="ic"><use href="#book"/></svg><span>钢管</span></li>
        <li><svg class="ic9"><use href="#tplus"/></svg><svg class="ic"><use href="#book"/></svg><span>钢丝</span></li>
        <li><svg class="ic9"><use href="#tplus"/></svg><svg class="ic"><use href="#book"/></svg><span>钢轨</span></li>
      </ul>
      <h3>查询表:</h3>
      <div class="query">
        <table class="grid soft">
          <colgroup><col class="c21"><col class="c81"><col class="c79"><col class="c31"></colgroup>
          <thead><tr><th></th><th class="orange">名称</th><th>值</th><th>选择</th></tr></thead>
          <tbody>
            <tr><th class="orange"></th><td class="picked">直径(mm)</td><td></td><td></td></tr>
            <tr><th></th><td class="gray">重量(Kg/m)</td><td class="green"></td><td class="mid"><input type="checkbox" class="box" checked aria-label="选择重量"></td></tr>
            <tr><th></th><td class="gray">截面积(cm2)</td><td class="green"></td><td class="mid"><input type="checkbox" class="box" aria-label="选择截面积"></td></tr>
          </tbody>
        </table>
      </div>
    </div>
    <div class="dlgright">
      <div class="viewport">
        <table class="grid soft data">
          <colgroup><col class="c21"><col class="c81"><col class="c101"><col></colgroup>
          <thead><tr><th></th><th>直径(mm)</th><th class="orange">重量(Kg/m)</th><th>截面积(cm2)</th></tr></thead>
          <tbody>
            <tr><th class="orange"></th><td>5.5</td><td class="curcell">0.186</td><td>0.2375</td></tr>
            <tr><th></th><td>6</td><td>0.222</td><td>0.2827</td></tr>
            <tr><th></th><td>6.5</td><td>0.26</td><td>0.3318</td></tr>
            <tr><th></th><td>7</td><td>0.302</td><td>0.3848</td></tr>
            <tr><th></th><td>8</td><td>0.395</td><td>0.5027</td></tr>
            <tr><th></th><td>9</td><td>0.499</td><td>0.6362</td></tr>
            <tr><th></th><td>10</td><td>0.617</td><td>0.7854</td></tr>
            <tr><th></th><td>11</td><td>0.746</td><td>0.9503</td></tr>
            <tr><th></th><td>12</td><td>0.888</td><td>1.131</td></tr>
            <tr><th></th><td>13</td><td>1.04</td><td>1.327</td></tr>
            <tr><th></th><td>14</td><td>1.21</td><td>1.539</td></tr>
            <tr><th></th><td>15</td><td>1.39</td><td>1.767</td></tr>
            <tr><th></th><td>16</td><td>1.58</td><td>2.011</td></tr>
            <tr><th></th><td>17</td><td>1.78</td><td>2.27</td></tr>
            <tr><th></th><td>18</td><td>2</td><td>2.545</td></tr>
            <tr><th></th><td>19</td><td>2.23</td><td>2.835</td></tr>
            <tr><th></th><td>20</td><td>2.47</td><td>3.142</td></tr>
          </tbody>
        </table>
        <div class="vscroll"><button aria-label="上滚"><svg class="ic8 r90"><use href="#left"/></svg></button><i class="vthumb"></i><button class="end" aria-label="下滚"><svg class="ic8 r270"><use href="#left"/></svg></button></div>
      </div>
      <div class="hscroll inset"><button aria-label="左滚"><svg class="ic8"><use href="#left"/></svg></button><i class="thumb"></i><button class="end" aria-label="右滚"><svg class="ic8 flip"><use href="#left"/></svg></button></div>
    </div>
  </div>
  <div class="dlgfoot"><p>请在表格中选择或输入值,然后按回车键查询结果, 结果将自动保存到剪切板上</p><button>退出</button></div>
</div>

<i class="mark tool-mark"></i><i class="mark title-mark"></i><i class="dot d1"></i><i class="dot d2"></i>
</body>
</html>
```
FILE: styles.css
```css
:root{
  --ui:"Open Sans","Noto Sans CJK SC",sans-serif;
  --song:"Noto Sans Mono CJK SC","Noto Sans CJK SC",sans-serif;
  --face:#f0f0f0;
  --line:#c0c0c0;
  --edge:#a7a9ae;
}
*{box-sizing:border-box}
body{margin:0;height:100vh;display:flex;flex-direction:column;overflow:hidden;position:relative;background:var(--face);color:#000;font:12px/14px var(--song)}
button{margin:0;padding:0;border:0;background:none;font:inherit;color:inherit;display:flex;align-items:center;justify-content:center;white-space:nowrap;flex:none}
h1,h2,h3,p,ul{margin:0;padding:0;font:inherit;list-style:none}
svg{flex:none;display:block}
.defs{position:absolute;width:0;height:0}
.ic{width:16px;height:16px}
.ic8{width:8px;height:8px}
.ic9{width:9px;height:9px}
.ic10{width:10px;height:10px}
.ic13{width:13px;height:13px}
.flip{transform:scaleX(-1)}
.r90{transform:rotate(90deg)}
.r180{transform:rotate(180deg)}
.r270{transform:rotate(270deg)}
.dimarrow{color:#b4b4b4}
.bluearrow{color:#2c62c4}

.titlebar{height:23px;flex:none;display:flex;align-items:center;gap:5px;padding-left:2px;background:#fff;font-family:Inter,"Noto Sans CJK SC",sans-serif;color:#8c8c8c}
.title{flex:1;min-width:0;overflow:hidden;white-space:nowrap;line-height:20px}
.winbtns{display:flex;padding-right:2px}
.winbtns button{width:46px;height:20px}
.menubar{height:27px;flex:none;display:flex;align-items:center;gap:11px;padding-left:3px;font-family:var(--ui)}
.menubar>.ic{margin-right:-5px}
.withicon{gap:3px}
.mdibtns{margin-left:auto;display:flex;gap:8px;padding-right:4px}

.toolbar{height:27px;flex:none;display:flex;gap:2px;font-family:var(--ui)}
.group{display:flex;align-items:center;height:26px;padding-right:2px;background:linear-gradient(#fbfbfb,#f4f4f4);border-radius:3px}
.grip{flex:none;width:3px;height:15px;margin:0 2px;background:repeating-linear-gradient(#b4b4b4 0 2px,transparent 2px 4px)}
.slot{width:23px;height:23px}
.sep{flex:none;width:1px;height:14px;margin:0 3px;background:#bdbdbd}
.drop{width:12px}
.drop::after,.menu::after{content:"";border:3px solid transparent;border-top-color:#000;border-bottom:0}
.drop.dim::after{border-top-color:#777}
.tool{height:23px;padding:0 3px;gap:3px}
.tool.on{border:1px solid #0078d7;background:#dcebf7}
.tool.off{color:#7b7b7b}
.opt{display:flex;align-items:center;gap:8px;margin-left:4px}
.menu{height:23px}
.menu::after{margin:0 8px}
.menu.tight::after{margin:0 8px 0 3px}
.menu .ic{margin-right:4px}
.menu+.sep{margin-left:0}
.second{padding-left:2px}
.second .grip{margin-right:6px}
.find{margin:0 5px 0 -6px}

.work{flex:1;min-height:0;display:flex}
.rail{width:25px;flex:none;position:relative;display:flex;flex-direction:column;align-items:center;overflow:hidden;background:#f7f7f7;border-right:1px solid #8a8a8a}
.railart{position:absolute;left:0;top:0}
.rail>button{position:relative;width:13px;line-height:13px;white-space:normal;word-break:break-all;flex:none;margin-left:1px}
.rail>.t1{height:82px;margin-top:9px}
.t2{height:79px}
.t3{height:77px}
.t5{height:91px}
.t7{height:52px}
.rail>.t8{height:auto;flex:1;min-height:0;align-items:flex-start;padding-top:14px;overflow:hidden}
.cur{font-weight:700}
.railscroll{position:relative;display:flex;width:24px;height:12px;margin-bottom:3px;align-self:flex-start}
.railscroll button{flex:1;border:1px solid #333;background:#d6d6d6}

.side{width:151px;flex:none;margin-left:4px;display:flex;flex-direction:column}
.sidehead{height:27px;display:flex;align-items:center;font-family:var(--ui);padding-right:10px}
.sidehead h2{flex:1;text-align:center}
.sidebox{flex:1;min-height:0;display:flex;flex-direction:column;background:#fff;border:1px solid #828790;padding:1px}
.tree{flex:1;overflow:hidden;padding:0 0 0 5px}
.tree li{height:14px;line-height:14px;white-space:nowrap;padding-left:19px;background:repeating-linear-gradient(90deg,#808080 0 1px,transparent 1px 2px) 8px 7px/10px 1px no-repeat,repeating-linear-gradient(#808080 0 1px,transparent 1px 2px) 8px 0/1px 14px no-repeat}
.tree li:last-child{background-size:10px 1px,1px 7px}
.tree .root{background:none;padding-left:0}
.tree .sel{background:#d4d4d4;padding:0 4px;margin-left:-4px;display:inline-block}
.sidetabs{height:22px;flex:none;position:relative;display:flex;align-items:flex-start;padding-left:13px;gap:9px}
.sidetabs svg{position:absolute;left:0;top:0;width:104px}
.sidetabs button{position:relative;height:17px}
.splitter{width:7px;flex:none}
.splitter i{display:block;height:101px;margin:264px 1px 0 0;border:1px solid #777;background:#f6f6f6}

.hscroll,.vscroll{display:flex;background:var(--face);flex:none}
.hscroll{height:17px;align-items:center}
.hscroll button{width:17px;height:17px}
.hscroll .end{margin-left:auto}
.thumb{width:17px;height:15px;background:#cdcdcd}
.thumb.wide{width:84px}
.inset{padding-right:17px}
.vscroll{width:17px;flex-direction:column;align-items:center;margin-left:auto}
.vscroll button{width:17px;height:17px}
.vscroll .end{margin-top:auto}
.vthumb{width:15px;height:17px;background:#cdcdcd}

.content{flex:1;min-width:0;display:flex;flex-direction:column}
.panel{display:flex;flex-direction:column;border:1px solid var(--edge);padding:1px;background:#fff}
.upper{height:200px;flex:none}
.viewport{flex:1;min-height:0;overflow:hidden;display:flex}
.grid{border-collapse:separate;border-spacing:0;table-layout:fixed;width:100%;align-self:flex-start}
.grid th,.grid td{border-right:1px solid var(--line);border-bottom:1px solid var(--line);padding:0 2px;font-weight:400;overflow:hidden;white-space:nowrap;line-height:14px}
.grid th{background:var(--face);text-align:center;padding:0}
.grid td{text-align:left}
.grid thead th{height:21px}
.grid td.mid{text-align:center}
.grid td.num{text-align:right;padding-right:3px}
.grid td.strong{font-weight:700;color:#0000f0}
.grid th.hot{background:linear-gradient(#fcdca4,#f3c363)}
.grid th.hotrow{background:#ffd283}
.grid td.curcell{background:#d9e9f8}
.c21{width:21px}.c31{width:31px}.c34{width:34px}.c38{width:38px}.c39{width:39px}.c40{width:40px}.c41{width:41px}.c43{width:43px}.c57{width:57px}.c75{width:75px}.c79{width:79px}.c80{width:80px}.c81{width:81px}.c97{width:97px}.c101{width:101px}.c119{width:119px}.c125{width:125px}.c126{width:126px}
.bill{flex:1;min-width:0;margin-right:1px}
.r1 td{height:19px;background:#e1f4ff}
.r2 td{height:77px;background:#a9dbfa}
.r3 td{height:29px}
.r4 td{height:20px}
.r5 td{height:24px}
.bill td.feat{vertical-align:top;padding-top:1px}
.r5 .top{vertical-align:top}
.grid td .ic13{display:inline-block;vertical-align:middle;margin-right:5px}
.bill td.lv1,.bill td.lv2,.bill td.lv3{background-image:linear-gradient(var(--line),var(--line)),linear-gradient(var(--line),var(--line)),linear-gradient(var(--line),var(--line));background-repeat:no-repeat;background-position:8px 0,18px 0,18px 50%;background-size:1px 100%,1px 100%,16px 1px}
.bill td.lv1{padding-left:12px;background-position:8px 0,18px 39px,8px 50%;background-size:1px 100%,1px 100%,5px 1px}
.bill td.lv2{padding-left:40px}
.bill td.lv3{padding-left:22px;background-size:1px 100%,1px 100%,5px 1px}

.tabs{height:30px;flex:none;display:flex;align-items:center;padding:6px 292px 0 2px}
.tabs button{height:24px;padding:0 10px}
.tabs .cur{height:20px;padding:0 5px;margin-right:4px;font-weight:400;background:#f8f8f8;border:1px solid #fff;border-top-color:#777;border-left-color:#777;box-shadow:-1px -1px 0 #aaa}
.tabs i{width:2px;height:20px;background:#a0a0a0;border-right:1px solid #fff}
.grow{flex:1}
.lower{flex:1;min-height:0;display:flex;margin-bottom:2px}
.detail{flex:1;min-width:0}
.res tbody td{height:19px}
.grid th.rt{text-align:right;padding-right:5px}
.grid th.cut{text-align:left;padding-left:3px}
.grid td.ck{text-align:right;padding-right:4px}
.res td.code{padding-right:6px}
.res th.cut,.res td.ck{border-right:0}
.box{appearance:none;width:13px;height:13px;margin:0;border:1px solid #333;background:#fff;vertical-align:middle}
.box.small{width:11px;height:11px;border-color:#999}
.box:checked{background:url("data:image/svg+xml,%3Csvg xmlns='http://www.w3.org/2000/svg' viewBox='0 0 11 11'%3E%3Cpath d='M2 5l3 3 5-6' fill='none' stroke='%23333' stroke-width='1.200'/%3E%3C/svg%3E")}
.actions{width:128px;flex:none;padding:5px 6px 0 7px}
.btns{display:grid;grid-template-columns:48px 48px;gap:6px;padding-left:4px}
.btns button,.dlgfoot button{height:23px;border:1px solid #adadad;background:#e1e1e1}
.btns .full{grid-column:1/3}
.actions fieldset{margin:4px 0 0;padding:4px 0 8px;border:1px solid #dcdcdc;display:grid;grid-template-columns:67px auto}
.actions legend{padding:0 2px;margin-left:4px;height:14px}
.actions label{display:flex;align-items:center;gap:3px;height:23px;white-space:nowrap}
.actions input{appearance:none;width:13px;height:13px;margin:0;border:1px solid #444;border-radius:50%;background:#fff}
.actions input:checked{background:radial-gradient(circle,#333 0 3px,#fff 4px)}

.status{height:21px;flex:none;display:grid;grid-template-columns:382fr 384fr 229fr 177fr 188fr;gap:2px;padding-right:1px}
.status span{border:1px solid #d2d2d2;background:linear-gradient(#fff,#f2f2f2);line-height:18px;white-space:nowrap;overflow:hidden}
.status span+span{padding-left:1px}

.taskbar{height:40px;flex:none;display:flex;align-items:center;background:#06161c;color:#fff;font-family:var(--ui)}
.start{width:48px;height:40px;background:#050808}
.cortana{width:344px;height:40px;display:flex;align-items:center;gap:9px;padding:0 14px 0 9px;background:#f2f2f2}
.taskbar input{flex:1;min-width:0;border:0;padding:0;background:none;font:14px/20px var(--ui)}
.cortana input::placeholder{color:#333;opacity:1}
.app{width:48px;height:40px;margin-right:2px}
.iebox{width:150px;height:30px;display:flex;align-items:center;gap:4px;padding:0 6px 0 3px;background:#48484a;border:1px solid #77797b}
.taskbar .iebox input{font-size:12px}
.iebox input::placeholder{color:#bbb;opacity:1}
.app.run{border:solid #76b9ed;border-width:0 0 3px;width:40px;margin:0 2px 0 7px}
.pdf{width:24px;height:24px;border-radius:3px;border:1px solid #d8a56a;background:#c87514;font:bold 10px/22px "Liberation Sans",sans-serif}
.tray{margin-left:auto;display:flex;align-items:center;height:40px}
.tray button{width:24px;height:40px}
.spin{width:16px;height:40px;background:var(--face);display:flex;flex-direction:column}
.tray .spin button{width:16px;height:20px}
.cpu{width:86px;text-align:center;line-height:17px}
.clock{width:76px;text-align:center;line-height:18px}
.tray .w32{width:32px}
.tray .w46{width:46px}
.tray .zh{font-size:13px}
.edge{width:6px;height:40px;border-left:1px solid #555}

.ime{position:absolute;left:1018px;top:19px;height:24px;width:185px;display:flex;align-items:center;justify-content:space-between;padding:0 4px 0 10px;background:#fff;border:1px solid #b9cfe6}
.ime b{color:#1a73c9;font-size:15px;line-height:20px}
.imelogo{position:absolute;left:-24px;top:-5px;width:29px;height:29px}

.dialog{position:absolute;left:412px;top:163px;width:541px;display:flex;flex-direction:column;background:var(--face);border:1px solid #2f86dd;box-shadow:0 3px 14px rgba(0,0,0,.4)}
.dlghead{height:31px;display:flex;align-items:center;gap:5px;padding:0 9px 2px 8px;background:#fff;font-family:var(--ui)}
.dlghead h2{flex:1}
.dlgbody{display:flex;height:353px;padding:0 1px;gap:1px}
.dlgleft{width:225px;display:flex;flex-direction:column}
.booktree{height:228px;overflow:hidden;background:#fff;border:1px solid #828790;padding:1px 0 0 8px}
.booktree li{display:flex;align-items:center;height:16px;gap:6px;white-space:nowrap;background:repeating-linear-gradient(90deg,#909090 0 1px,transparent 1px 2px) 5px 8px/10px 1px no-repeat,repeating-linear-gradient(#909090 0 1px,transparent 1px 2px) 4px 0/1px 16px no-repeat}
.booktree li:not(.leaf) span{margin-left:-2px}
.booktree .leaf{padding-left:33px;gap:4px;background:repeating-linear-gradient(90deg,#909090 0 1px,transparent 1px 2px) 23px 8px/10px 1px no-repeat,repeating-linear-gradient(#909090 0 1px,transparent 1px 2px) 23px 0/1px 16px no-repeat,repeating-linear-gradient(#909090 0 1px,transparent 1px 2px) 4px 0/1px 16px no-repeat}
.booktree .sel{background:#0078d7;color:#fff;padding:1px 1px}
.booktree .leaf span:not(.sel){padding-left:1px}
.dlgleft h3{height:19px;line-height:22px;padding-left:3px}
.query{flex:1;background:#fff;border:1px solid var(--edge);padding:1px}
.query .grid{width:212px}
.grid.soft thead th{height:19px}
.soft td{height:19px}
.soft th:first-child{background:linear-gradient(90deg,#fff,#eee)}
.soft thead th{background:linear-gradient(#fff,#eee)}
.grid.soft tr th.orange{background:#ffc06c}
.soft .picked{background:#cbddec}
.soft .gray{background:#ededed}
.soft .green{background:#c0dcc0}
.dlgright{flex:1;min-width:0;display:flex;flex-direction:column;background:#fff;border:1px solid var(--edge);padding:1px}
.data{flex:1;min-width:0}
.grid.data td{padding-left:1px}
.data td:last-child,.data th:last-child{border-right:0}
.dlgfoot{height:36px;display:flex;align-items:center;padding:0 9px 0 4px}
.dlgfoot p{flex:1;padding-top:4px;white-space:nowrap}
.dlgfoot button{width:59px}

.mark{position:absolute;border:7px solid #f00}
.tool-mark{left:1137px;top:44px;width:57px;height:48px}
.title-mark{left:385px;top:149px;width:167px;height:54px}
.dot{position:absolute;width:7px;height:7px;border-radius:50%;background:#f00}
.d1{left:1032px;top:128px}
.d2{left:995px;top:181px}
```
